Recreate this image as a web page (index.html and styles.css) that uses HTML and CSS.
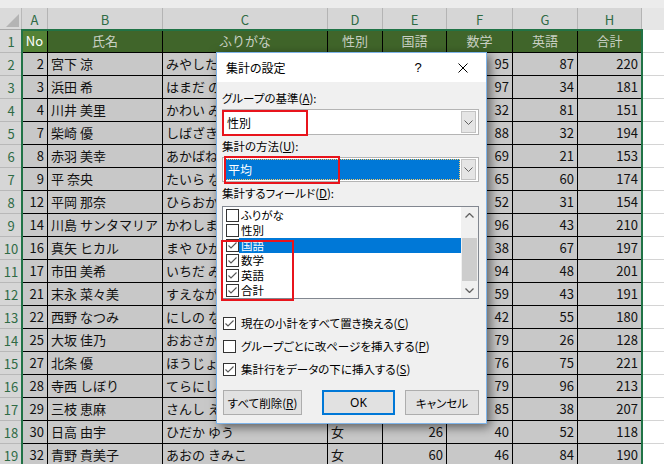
FILE: index.html
```html
<!DOCTYPE html>
<html lang="ja">
<head>
<meta charset="utf-8">
<title>集計の設定</title>
<link rel="stylesheet" href="styles.css">
</head>
<body>
<div class="sheet">
  <div class="topstrip"></div>
  <div class="grid">
    <div class="corner"></div>
    <div class="ch">A</div><div class="ch">B</div><div class="ch">C</div><div class="ch">D</div><div class="ch">E</div><div class="ch">F</div><div class="ch">G</div><div class="ch">H</div><div class="ch off"></div>

    <div class="rh">1</div><div class="c hd active">No</div><div class="c hd">氏名</div><div class="c hd">ふりがな</div><div class="c hd">性別</div><div class="c hd">国語</div><div class="c hd">数学</div><div class="c hd">英語</div><div class="c hd">合計</div><div class="ex"></div>

    <div class="rh">2</div><div class="c num">2</div><div class="c">宮下 涼</div><div class="c">みやした りょう</div><div class="c">男</div><div class="c num">38</div><div class="c num">95</div><div class="c num">87</div><div class="c num">220</div><div class="ex"></div>
    <div class="rh">3</div><div class="c num">3</div><div class="c">浜田 希</div><div class="c">はまだ のぞみ</div><div class="c">女</div><div class="c num">50</div><div class="c num">97</div><div class="c num">34</div><div class="c num">181</div><div class="ex"></div>
    <div class="rh">4</div><div class="c num">4</div><div class="c">川井 美里</div><div class="c">かわい みさと</div><div class="c">女</div><div class="c num">38</div><div class="c num">32</div><div class="c num">81</div><div class="c num">151</div><div class="ex"></div>
    <div class="rh">5</div><div class="c num">7</div><div class="c">柴崎 優</div><div class="c">しばざき ゆう</div><div class="c">男</div><div class="c num">74</div><div class="c num">88</div><div class="c num">32</div><div class="c num">194</div><div class="ex"></div>
    <div class="rh">6</div><div class="c num">8</div><div class="c">赤羽 美幸</div><div class="c">あかばね みゆき</div><div class="c">女</div><div class="c num">63</div><div class="c num">69</div><div class="c num">21</div><div class="c num">153</div><div class="ex"></div>
    <div class="rh">7</div><div class="c num">9</div><div class="c">平 奈央</div><div class="c">たいら なお</div><div class="c">女</div><div class="c num">49</div><div class="c num">65</div><div class="c num">60</div><div class="c num">174</div><div class="ex"></div>
    <div class="rh">8</div><div class="c num">12</div><div class="c">平岡 那奈</div><div class="c">ひらおか なな</div><div class="c">女</div><div class="c num">71</div><div class="c num">52</div><div class="c num">31</div><div class="c num">154</div><div class="ex"></div>
    <div class="rh">9</div><div class="c num">14</div><div class="c">川島 サンタマリア</div><div class="c">かわしま さんたまりあ</div><div class="c">女</div><div class="c num">71</div><div class="c num">96</div><div class="c num">43</div><div class="c num">210</div><div class="ex"></div>
    <div class="rh">10</div><div class="c num">16</div><div class="c">真矢 ヒカル</div><div class="c">まや ひかる</div><div class="c">男</div><div class="c num">92</div><div class="c num">38</div><div class="c num">67</div><div class="c num">197</div><div class="ex"></div>
    <div class="rh">11</div><div class="c num">17</div><div class="c">市田 美希</div><div class="c">いちだ みき</div><div class="c">女</div><div class="c num">59</div><div class="c num">94</div><div class="c num">48</div><div class="c num">201</div><div class="ex"></div>
    <div class="rh">12</div><div class="c num">21</div><div class="c">末永 菜々美</div><div class="c">すえなが ななみ</div><div class="c">女</div><div class="c num">89</div><div class="c num">59</div><div class="c num">43</div><div class="c num">191</div><div class="ex"></div>
    <div class="rh">13</div><div class="c num">22</div><div class="c">西野 なつみ</div><div class="c">にしの なつみ</div><div class="c">女</div><div class="c num">83</div><div class="c num">42</div><div class="c num">55</div><div class="c num">180</div><div class="ex"></div>
    <div class="rh">14</div><div class="c num">25</div><div class="c">大坂 佳乃</div><div class="c">おおさか よしの</div><div class="c">女</div><div class="c num">23</div><div class="c num">79</div><div class="c num">26</div><div class="c num">128</div><div class="ex"></div>
    <div class="rh">15</div><div class="c num">27</div><div class="c">北条 優</div><div class="c">ほうじょう ゆう</div><div class="c">男</div><div class="c num">70</div><div class="c num">76</div><div class="c num">75</div><div class="c num">221</div><div class="ex"></div>
    <div class="rh">16</div><div class="c num">28</div><div class="c">寺西 しぼり</div><div class="c">てらにし しぼり</div><div class="c">女</div><div class="c num">38</div><div class="c num">79</div><div class="c num">96</div><div class="c num">213</div><div class="ex"></div>
    <div class="rh">17</div><div class="c num">29</div><div class="c">三枝 恵麻</div><div class="c">さんし えま</div><div class="c">女</div><div class="c num">84</div><div class="c num">85</div><div class="c num">38</div><div class="c num">207</div><div class="ex"></div>
    <div class="rh">18</div><div class="c num">30</div><div class="c">日高 由宇</div><div class="c">ひだか ゆう</div><div class="c">女</div><div class="c num">26</div><div class="c num">40</div><div class="c num">52</div><div class="c num">118</div><div class="ex"></div>
    <div class="rh">19</div><div class="c num">32</div><div class="c">青野 貴美子</div><div class="c">あおの きみこ</div><div class="c">女</div><div class="c num">60</div><div class="c num">46</div><div class="c num">84</div><div class="c num">190</div><div class="ex"></div>
  </div>

  <div class="sel"></div>

  <div class="dlg">
    <div class="titlebar">
      <span class="title">集計の設定</span>
      <span class="help">?</span>
      <span class="close"><svg width="10" height="10" viewBox="0 0 10 10"><path d="M0.5 0.5 L9.5 9.5 M9.5 0.5 L0.5 9.5" stroke="#000" stroke-width="1" fill="none"/></svg></span>
    </div>
    <div class="body">
      <div class="lbl l1">グループの基準(<u>A</u>):</div>
      <div class="combo c1">
        <div class="val">性別</div>
        <div class="dd"><svg width="9" height="5" viewBox="0 0 9 5"><path d="M0.5 0.5 L4.5 4.5 L8.5 0.5" stroke="#606060" fill="none"/></svg></div>
      </div>
      <div class="lbl">集計の方法(<u>U</u>):</div>
      <div class="combo c2">
        <div class="val"><span class="selv">平均</span></div>
        <div class="dd"><svg width="9" height="5" viewBox="0 0 9 5"><path d="M0.5 0.5 L4.5 4.5 L8.5 0.5" stroke="#606060" fill="none"/></svg></div>
      </div>
      <div class="lbl">集計するフィールド(<u>D</u>):</div>
      <div class="list">
        <div class="items">
          <div class="item"><span class="cb"></span><span class="t">ふりがな</span></div>
          <div class="item"><span class="cb"></span><span class="t">性別</span></div>
          <div class="item"><span class="cb"><svg width="11" height="11" viewBox="0 0 11 11"><path d="M1.5 5.5 L4 8 L9.5 2.5" stroke="#555" stroke-width="1.1" fill="none"/></svg></span><span class="t on">国語</span></div>
          <div class="item"><span class="cb"><svg width="11" height="11" viewBox="0 0 11 11"><path d="M1.5 5.5 L4 8 L9.5 2.5" stroke="#555" stroke-width="1.1" fill="none"/></svg></span><span class="t">数学</span></div>
          <div class="item"><span class="cb"><svg width="11" height="11" viewBox="0 0 11 11"><path d="M1.5 5.5 L4 8 L9.5 2.5" stroke="#555" stroke-width="1.1" fill="none"/></svg></span><span class="t">英語</span></div>
          <div class="item"><span class="cb"><svg width="11" height="11" viewBox="0 0 11 11"><path d="M1.5 5.5 L4 8 L9.5 2.5" stroke="#555" stroke-width="1.1" fill="none"/></svg></span><span class="t">合計</span></div>
        </div>
        <div class="sb">
          <div class="arr"><svg width="9" height="5" viewBox="0 0 9 5"><path d="M0.5 4.5 L4.5 0.5 L8.5 4.5" stroke="#606060" stroke-width="1.3" fill="none"/></svg></div>
          <div class="track"><div class="thumb"></div></div>
          <div class="arr"><svg width="9" height="5" viewBox="0 0 9 5"><path d="M0.5 0.5 L4.5 4.5 L8.5 0.5" stroke="#606060" stroke-width="1.3" fill="none"/></svg></div>
        </div>
      </div>
      <div class="opt o1"><span class="cb"><svg width="11" height="11" viewBox="0 0 11 11"><path d="M1.5 5.5 L4 8 L9.5 2.5" stroke="#555" stroke-width="1.1" fill="none"/></svg></span><span>現在の小計をすべて置き換える(<u>C</u>)</span></div>
      <div class="opt"><span class="cb"></span><span>グループごとに改ページを挿入する(<u>P</u>)</span></div>
      <div class="opt"><span class="cb"><svg width="11" height="11" viewBox="0 0 11 11"><path d="M1.5 5.5 L4 8 L9.5 2.5" stroke="#555" stroke-width="1.1" fill="none"/></svg></span><span>集計行をデータの下に挿入する(<u>S</u>)</span></div>
      <div class="btns">
        <div class="btn b1">すべて削除(<u>R</u>)</div>
        <div class="btn ok">OK</div>
        <div class="btn b3">キャンセル</div>
      </div>
    </div>
    <div class="red r1"></div>
    <div class="red r2"></div>
    <div class="red r3"></div>
  </div>
</div>
</body>
</html>
```

FILE: styles.css
```css
html, body {
  margin: 0;
  padding: 0;
}
body {
  width: 664px;
  height: 464px;
  overflow: hidden;
  background: #fff;
  font-family: "Noto Sans CJK JP", "Noto Sans", sans-serif;
}
.sheet {
  position: relative;
  width: 664px;
  height: 464px;
  overflow: hidden;
}
.topstrip {
  height: 8px;
  background: #ececec;
}
.grid {
  display: grid;
  grid-template-columns: 22px 26px 115px 165px 55px 64px 66px 65px 64px 60px;
  grid-template-rows: 22px;
  grid-auto-rows: 23px;
}
.corner {
  position: relative;
  background: #dadada;
  border-right: 1px solid #b8b8b8;
  border-bottom: 1px solid #a8a8a8;
  box-sizing: border-box;
}
.corner::after {
  content: "";
  position: absolute;
  right: 2px;
  bottom: 2px;
  width: 0;
  height: 0;
  border-left: 13px solid transparent;
  border-bottom: 13px solid #b4b4b4;
}
.ch {
  background: #d6d6d6;
  color: #2f6b45;
  font-size: 13px;
  display: flex;
  align-items: center;
  justify-content: center;
  border-right: 1px solid #b4b4b4;
  box-sizing: border-box;
}
.ch.off {
  background: #e6e6e6;
}
.rh {
  background: #d6d6d6;
  color: #2f6b45;
  font-size: 13px;
  display: flex;
  align-items: center;
  justify-content: center;
  border-bottom: 1px solid #b8b8b8;
  box-sizing: border-box;
}
.c {
  background: #c8c8c8;
  color: #111;
  border-right: 1px solid #000;
  border-bottom: 1px solid #000;
  box-sizing: border-box;
  font-size: 13px;
  line-height: 22px;
  padding: 0 3px;
  white-space: nowrap;
  overflow: hidden;
}
.c.num {
  text-align: right;
}
.c.hd {
  background: #40652a;
  color: #c9d0c3;
  text-align: center;
}
.c.hd.active {
  background: #548235;
  color: #ffffff;
}
.ex {
  background: #fff;
  border-bottom: 1px solid #d4d4d4;
  box-sizing: border-box;
}
.sel {
  position: absolute;
  left: 21px;
  top: 29px;
  width: 622px;
  height: 460px;
  border: 2px solid #217346;
  box-sizing: border-box;
  pointer-events: none;
}

/* dialog */
.dlg {
  position: absolute;
  left: 216px;
  top: 52px;
  width: 271px;
  height: 372px;
  box-sizing: border-box;
  border: 1px solid #7eb4ea;
  background: #f0f0f0;
  box-shadow: 3px 3px 10px rgba(0, 0, 0, 0.55);
  font-size: 11.5px;
  font-feature-settings: "palt";
  color: #000;
}
.titlebar {
  height: 29px;
  background: #fff;
  display: flex;
  align-items: center;
}
.title {
  font-size: 12px;
  padding-left: 9px;
  flex: 1;
}
.help {
  width: 30px;
  text-align: center;
  font-size: 13px;
  font-family: "Liberation Sans", sans-serif;
  margin-right: 18px;
}
.close {
  width: 24px;
  display: flex;
  justify-content: center;
  margin-right: 11px;
}
.body {
  padding: 0 7px 0 5px;
}
.lbl {
  line-height: 16px;
  margin-top: 3px;
  white-space: nowrap;
}
.lbl.l1 {
  margin-top: 8px;
}
.combo {
  margin-top: 3px;
  height: 26px;
  box-sizing: border-box;
  border: 1px solid #b4b4b4;
  background: #fff;
  display: flex;
  align-items: stretch;
  padding: 1px 1px 1px 2px;
}
.combo.c2 {
  height: 25px;
}
.combo .val {
  flex: 1;
  display: flex;
  align-items: center;
  padding-left: 2px;
  font-size: 12px;
}
.combo.c2 .val {
  padding-left: 0;
  margin-right: 1px;
}
.selv {
  flex: 1;
  align-self: stretch;
  background: #0078d7;
  color: #fff;
  border: 1px dotted #f7c96a;
  display: flex;
  align-items: center;
  padding-left: 2px;
}
.combo .dd {
  width: 15px;
  box-sizing: border-box;
  border: 1px solid #c3c3c3;
  background: #e5e5e5;
  display: flex;
  align-items: center;
  justify-content: center;
  margin-right: 1px;
}
.list {
  margin-top: 5px;
  height: 93px;
  box-sizing: border-box;
  border: 1px solid #828790;
  background: #fff;
  display: flex;
  padding-top: 1px;
}
.items {
  flex: 1;
}
.item {
  height: 15px;
  display: flex;
  align-items: center;
  padding-left: 3px;
  font-size: 11.5px;
  line-height: 15px;
}
.cb {
  width: 13px;
  height: 13px;
  box-sizing: border-box;
  border: 1px solid #333;
  background: #fff;
  display: inline-flex;
  align-items: center;
  justify-content: center;
  flex: none;
}
.item .t {
  flex: 1;
  height: 15px;
  line-height: 15px;
  padding-left: 2px;
}
.item .t.on {
  background: #0078d7;
  color: #fff;
}
.sb {
  width: 17px;
  margin-top: -1px;
  background: #f0f0f0;
  display: flex;
  flex-direction: column;
}
.sb .arr {
  height: 17px;
  display: flex;
  align-items: center;
  justify-content: center;
}
.sb .track {
  flex: 1;
  padding-top: 15px;
  padding-bottom: 1px;
}
.thumb {
  height: 43px;
  background: #cdcdcd;
  margin: 0 1px;
}
.opt {
  display: flex;
  align-items: center;
  height: 18px;
  margin-top: 5px;
  padding-left: 1px;
  white-space: nowrap;
}
.opt.o1 {
  margin-top: 15px;
}
.opt .cb {
  margin-right: 5px;
}
.btns {
  display: flex;
  margin-top: 12px;
  padding-left: 1px;
}
.btn {
  height: 25px;
  box-sizing: border-box;
  border: 1px solid #adadad;
  background: #e1e1e1;
  display: flex;
  align-items: center;
  justify-content: center;
  white-space: nowrap;
}
.btn.b1 {
  width: 79px;
}
.btn.ok {
  width: 73px;
  margin-left: 20px;
  border: 2px solid #0078d7;
  font-family: "Noto Sans", sans-serif;
  font-size: 12px;
}
.btn.b3 {
  width: 74px;
  margin-left: 10px;
}
.red {
  position: absolute;
  box-sizing: border-box;
  border: 2px solid #e8141c;
  pointer-events: none;
}
.r1 {
  left: 5px;
  top: 57px;
  width: 86px;
  height: 26px;
}
.r2 {
  left: 7px;
  top: 103px;
  width: 116px;
  height: 28px;
}
.r3 {
  left: 4px;
  top: 187px;
  width: 73px;
  height: 61px;
}
```
